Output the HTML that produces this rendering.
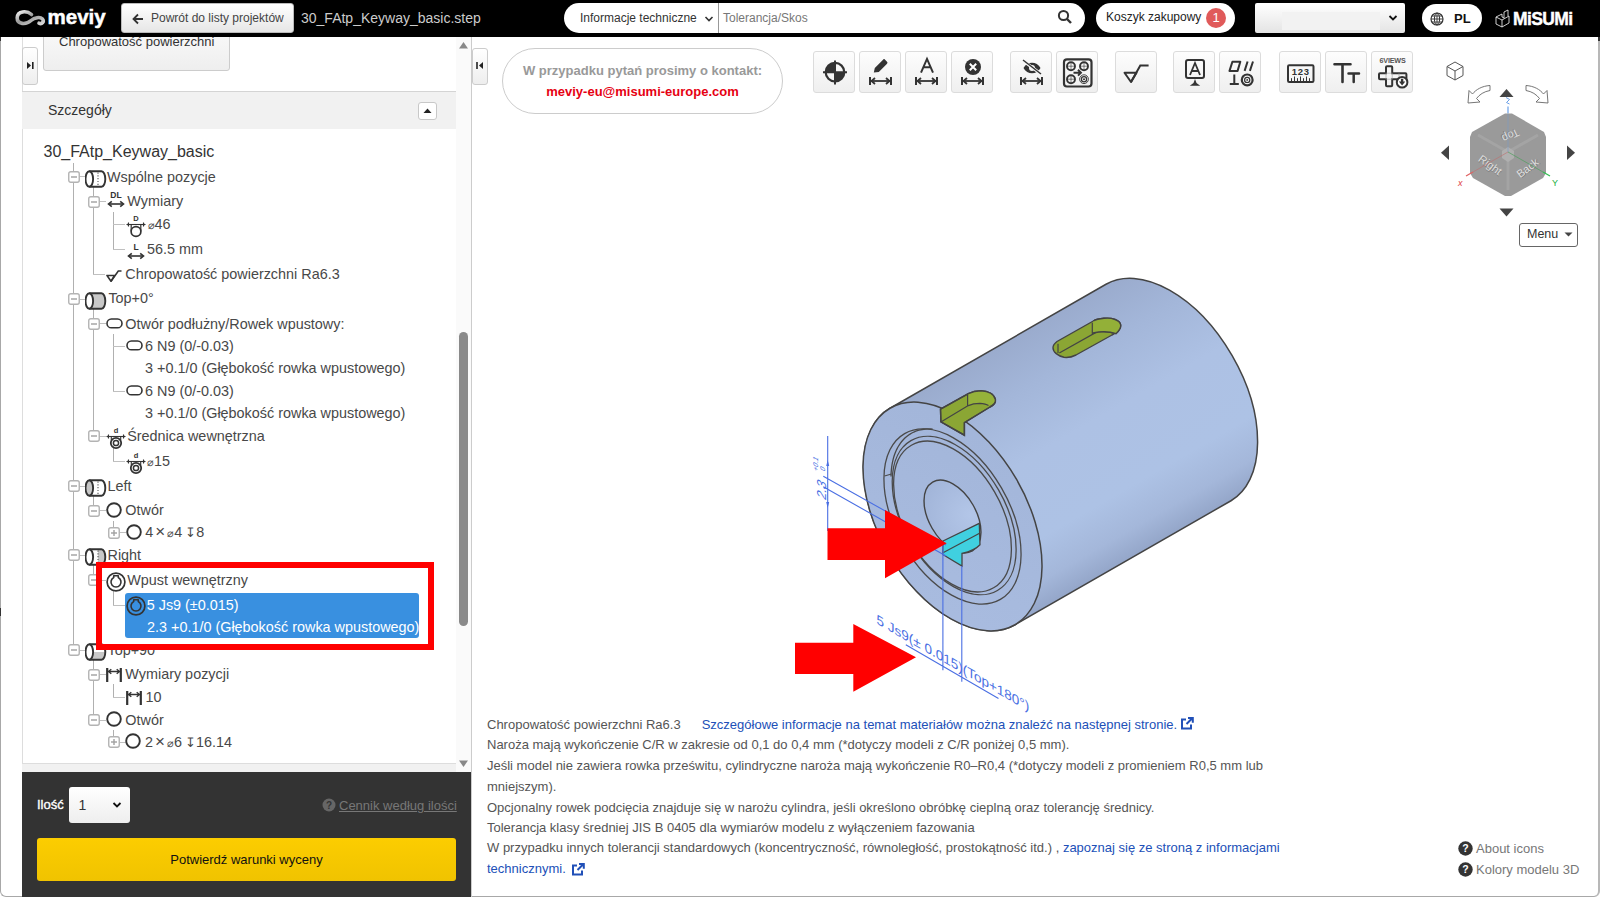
<!DOCTYPE html>
<html><head><meta charset="utf-8">
<style>
*{box-sizing:border-box;margin:0;padding:0}
html,body{width:1600px;height:900px;overflow:hidden;background:#fff;font-family:"Liberation Sans",sans-serif;color:#333;position:relative}
.a{position:absolute}
#hdr{left:0;top:0;width:1600px;height:37px;background:#000;z-index:10}
.btn-grad{background:linear-gradient(#fff,#e6e6e6);border:1px solid #ccc;border-radius:3px}
.tb{position:absolute;top:51px;width:42px;height:42px;border:1px solid #dcdcdc;border-radius:3px;background:linear-gradient(#fdfdfd,#efefef)}
.tb svg{position:absolute;left:0;top:0}
.tr{position:absolute;font-family:"Liberation Sans",sans-serif;font-size:14.4px;color:#444;white-space:nowrap;line-height:16px}
.info{position:absolute;left:487px;font-size:13px;color:#555;white-space:nowrap;line-height:15px}
.lnk{color:#2150b8}
</style></head><body>
<!-- HEADER -->
<div id="hdr" class="a">
  <!-- meviy logo -->
  <svg class="a" style="left:14px;top:9px" width="34" height="19" viewBox="14 9 34 19">
    <defs><linearGradient id="lg" x1="0" y1="0" x2="1" y2="1"><stop offset="0" stop-color="#f0f0f0"/><stop offset=".45" stop-color="#9a9a9a"/><stop offset="1" stop-color="#d8d8d8"/></linearGradient></defs>
    <path d="M31.5,14.5 C27,10.5 17.5,10.5 17.2,17.8 C17,24.5 26,25 31,20.5 C34.5,17.5 40,16.5 42.5,19 C44.5,21.5 42,24.5 39,23.2" fill="none" stroke="url(#lg)" stroke-width="3.6" stroke-linecap="round"/>
  </svg>
  <div class="a" style="left:47.5px;top:5px;font-size:20.5px;font-weight:bold;color:#fff;letter-spacing:0px;-webkit-text-stroke:0.5px #fff;line-height:24px">meviy</div>
  <div class="a btn-grad" style="left:121px;top:3px;width:173px;height:30px;border-color:#bbb"></div>
  <svg class="a" style="left:131px;top:12px" width="14" height="14" viewBox="0 0 14 14"><path d="M12,7 H2.5 M7,2.5 L2.5,7 L7,11.5" stroke="#333" stroke-width="1.8" fill="none"/></svg>
  <div class="a" style="left:151px;top:11px;font-size:12px;color:#444">Powrót do listy projektów</div>
  <div class="a" style="left:301px;top:10px;font-size:14px;color:#ccc">30_FAtp_Keyway_basic.step</div>
  <!-- search -->
  <div class="a" style="left:564px;top:3px;width:521px;height:30px;background:#fff;border-radius:15px"></div>
  <div class="a" style="left:580px;top:11px;font-size:12px;color:#333">Informacje techniczne</div>
  <svg class="a" style="left:704px;top:15px" width="10" height="8" viewBox="0 0 10 8"><path d="M1.5,2 L5,5.5 L8.5,2" stroke="#333" stroke-width="1.6" fill="none"/></svg>
  <div class="a" style="left:718px;top:3px;width:1px;height:30px;background:#999"></div>
  <div class="a" style="left:723px;top:11px;font-size:12px;color:#777">Tolerancja/Skos</div>
  <svg class="a" style="left:1057px;top:9px" width="16" height="16" viewBox="0 0 16 16"><circle cx="6.5" cy="6.5" r="4.6" stroke="#333" stroke-width="2" fill="none"/><path d="M10,10 L14,14" stroke="#333" stroke-width="2.4"/></svg>
  <!-- cart -->
  <div class="a" style="left:1096px;top:3px;width:139px;height:30px;background:#fff;border-radius:15px"></div>
  <div class="a" style="left:1106px;top:10px;font-size:12px;color:#222">Koszyk zakupowy</div>
  <div class="a" style="left:1206px;top:8px;width:20px;height:20px;border-radius:50%;background:#e05a5a;color:#fff;font-size:13px;text-align:center;line-height:20px">1</div>
  <!-- dropdown -->
  <div class="a" style="left:1255px;top:3px;width:150px;height:30px;background:linear-gradient(#fff,#e4e4e4);border-radius:2px"></div>
  <div class="a" style="left:1282px;top:12px;width:98px;height:18px;background:#f2f2f2"></div>
  <svg class="a" style="left:1388px;top:14px" width="10" height="8" viewBox="0 0 10 8"><path d="M1.5,2 L5,5.5 L8.5,2" stroke="#111" stroke-width="1.8" fill="none"/></svg>
  <!-- PL -->
  <div class="a" style="left:1422px;top:4px;width:60px;height:28px;background:#fff;border-radius:14px"></div>
  <svg class="a" style="left:1430px;top:12px" width="14" height="14" viewBox="0 0 14 14"><circle cx="7" cy="7" r="6" stroke="#333" stroke-width="1.2" fill="none"/><ellipse cx="7" cy="7" rx="2.6" ry="6" stroke="#333" stroke-width="1" fill="none"/><path d="M1,7 H13 M2,4 H12 M2,10 H12 M7,1 V13" stroke="#333" stroke-width="0.9"/></svg>
  <div class="a" style="left:1454px;top:11px;font-size:13px;font-weight:bold;color:#111">PL</div>
  <!-- misumi -->
  <svg class="a" style="left:1495px;top:9px" width="16" height="19" viewBox="0 0 16 19"><path d="M1,8 L7,11 L7,18 L1,15 Z M7,11 L14,7 L14,14 L7,18 M1,8 L7,5 M7,5 L7,8 M7,8 L9,9 L9,3 L13,1 L13,7" stroke="#fff" stroke-width="0.8" fill="none"/></svg>
  <div class="a" style="left:1513px;top:9px;font-size:17.5px;font-weight:bold;color:#fff;letter-spacing:-0.6px;-webkit-text-stroke:0.4px #fff">MiSUMi</div>
</div>
<!-- left edge dark line -->
<div class="a" style="left:0;top:20px;width:1600px;height:877px;border:1px solid #a8a8a8;border-right:2px solid #b8b8b8;border-radius:0 0 6px 6px"></div>
<div class="a" style="left:0;top:37px;width:1px;height:4px;background:#333;z-index:11"></div>
<div class="a" style="left:0;top:608px;width:1px;height:8px;background:#333;z-index:11"></div>
<div class="a" style="left:1598px;top:37px;width:2px;height:4px;background:#333;z-index:11"></div>

<!-- LEFT PANEL -->
<div class="a" style="left:22px;top:37px;width:1px;height:735px;background:#ddd"></div>
<div class="a btn-grad" style="left:22px;top:47px;width:16px;height:38px;border-color:#ccc;background:linear-gradient(#fff,#eee)"></div>
<svg class="a" style="left:26px;top:61px" width="9" height="9" viewBox="0 0 9 9"><path d="M1,1 L5,4.5 L1,8Z" fill="#222"/><rect x="6" y="1" width="1.6" height="7" fill="#222"/></svg>
<div class="a" style="left:43px;top:20px;width:187px;height:51px;border:1px solid #ccc;border-radius:3px;background:linear-gradient(#fcfcfc,#eee)"></div>
<div class="a" style="left:59px;top:34px;font-size:13px;color:#333">Chropowatość powierzchni</div>

<div class="a" style="left:22px;top:91px;width:434px;height:38px;background:#f1f1f1;border-top:1px solid #d4d4d4"></div>
<div class="a" style="left:48px;top:102px;font-size:14px;color:#333">Szczegóły</div>
<div class="a" style="left:418px;top:102px;width:19px;height:18px;border:1px solid #c8c8c8;border-radius:3px;background:#fff"></div>
<svg class="a" style="left:422px;top:106px" width="11" height="9" viewBox="0 0 11 9"><path d="M1.5,7 L5.5,2.5 L9.5,7Z" fill="#222"/></svg>

<!-- scrollbar -->
<div class="a" style="left:456px;top:37px;width:15px;height:735px;background:#fafafa"></div>
<svg class="a" style="left:458px;top:41px" width="11" height="8" viewBox="0 0 11 8"><path d="M1,7.5 L5.5,1 L10,7.5Z" fill="#888"/></svg>
<div class="a" style="left:459px;top:332px;width:9px;height:294px;border-radius:5px;background:#8a8a8a"></div>
<svg class="a" style="left:458px;top:760px" width="11" height="8" viewBox="0 0 11 8"><path d="M1,0.5 L5.5,7 L10,0.5Z" fill="#888"/></svg>
<div class="a" style="left:22px;top:763px;width:434px;height:9px;background:#f1f1f1;border-top:1px solid #ddd"></div>

<!-- TREE placeholder -->
<div class="a" style="left:43.5px;top:143px;font-size:16px;color:#333;white-space:nowrap;line-height:18px">30_FAtp_Keyway_basic</div>
<div class="a" style="left:73px;top:163px;width:1px;height:487px;background:#b0b0b0"></div>
<div class="a" style="left:93px;top:187px;width:1px;height:87px;background:#b0b0b0"></div>
<div class="a" style="left:93px;top:274px;width:12px;height:1px;background:#c0c0c0"></div>
<div class="a" style="left:93px;top:309px;width:1px;height:127px;background:#b0b0b0"></div>
<div class="a" style="left:93px;top:496px;width:1px;height:15px;background:#b0b0b0"></div>
<div class="a" style="left:93px;top:565px;width:1px;height:15px;background:#b0b0b0"></div>
<div class="a" style="left:93px;top:660px;width:1px;height:60px;background:#b0b0b0"></div>
<div class="a" style="left:113px;top:212px;width:1px;height:37px;background:#b0b0b0"></div>
<div class="a" style="left:113px;top:224px;width:12px;height:1px;background:#c0c0c0"></div>
<div class="a" style="left:113px;top:249px;width:12px;height:1px;background:#c0c0c0"></div>
<div class="a" style="left:113px;top:334px;width:1px;height:57px;background:#b0b0b0"></div>
<div class="a" style="left:113px;top:346px;width:12px;height:1px;background:#c0c0c0"></div>
<div class="a" style="left:113px;top:391px;width:12px;height:1px;background:#c0c0c0"></div>
<div class="a" style="left:113px;top:446px;width:1px;height:15px;background:#b0b0b0"></div>
<div class="a" style="left:113px;top:461px;width:12px;height:1px;background:#c0c0c0"></div>
<div class="a" style="left:113px;top:521px;width:1px;height:11px;background:#b0b0b0"></div>
<div class="a" style="left:113px;top:590px;width:1px;height:15px;background:#b0b0b0"></div>
<div class="a" style="left:113px;top:605px;width:12px;height:1px;background:#c0c0c0"></div>
<div class="a" style="left:113px;top:684px;width:1px;height:13px;background:#b0b0b0"></div>
<div class="a" style="left:113px;top:697px;width:12px;height:1px;background:#c0c0c0"></div>
<div class="a" style="left:113px;top:730px;width:1px;height:12px;background:#b0b0b0"></div>
<div class="a" style="left:79px;top:176px;width:6px;height:1px;background:#c0c0c0"></div>
<div class="a" style="left:79px;top:299px;width:6px;height:1px;background:#c0c0c0"></div>
<div class="a" style="left:79px;top:486px;width:6px;height:1px;background:#c0c0c0"></div>
<div class="a" style="left:79px;top:555px;width:6px;height:1px;background:#c0c0c0"></div>
<div class="a" style="left:79px;top:650px;width:6px;height:1px;background:#c0c0c0"></div>
<div class="a" style="left:99px;top:201px;width:7px;height:1px;background:#c0c0c0"></div>
<div class="a" style="left:99px;top:323px;width:7px;height:1px;background:#c0c0c0"></div>
<div class="a" style="left:99px;top:436px;width:7px;height:1px;background:#c0c0c0"></div>
<div class="a" style="left:99px;top:510px;width:7px;height:1px;background:#c0c0c0"></div>
<div class="a" style="left:99px;top:580px;width:7px;height:1px;background:#c0c0c0"></div>
<div class="a" style="left:99px;top:674px;width:7px;height:1px;background:#c0c0c0"></div>
<div class="a" style="left:99px;top:720px;width:7px;height:1px;background:#c0c0c0"></div>
<div class="a" style="left:119px;top:532px;width:7px;height:1px;background:#c0c0c0"></div>
<div class="a" style="left:119px;top:742px;width:7px;height:1px;background:#c0c0c0"></div>
<div class="a" style="left:125px;top:592.5px;width:294px;height:45px;background:#3990e0;border-radius:3px"></div>
<svg class="a" style="left:67.8px;top:170.5px" width="12" height="12" viewBox="0 0 12 12"><rect x="0.75" y="0.75" width="10.5" height="10.5" rx="2" fill="#fff" stroke="#b3b3b3" stroke-width="1.4"/><path d="M3,6 H9" stroke="#a0a0a0" stroke-width="1.4"/></svg>
<svg class="a" style="left:67.8px;top:293.0px" width="12" height="12" viewBox="0 0 12 12"><rect x="0.75" y="0.75" width="10.5" height="10.5" rx="2" fill="#fff" stroke="#b3b3b3" stroke-width="1.4"/><path d="M3,6 H9" stroke="#a0a0a0" stroke-width="1.4"/></svg>
<svg class="a" style="left:67.8px;top:480.0px" width="12" height="12" viewBox="0 0 12 12"><rect x="0.75" y="0.75" width="10.5" height="10.5" rx="2" fill="#fff" stroke="#b3b3b3" stroke-width="1.4"/><path d="M3,6 H9" stroke="#a0a0a0" stroke-width="1.4"/></svg>
<svg class="a" style="left:67.8px;top:549.0px" width="12" height="12" viewBox="0 0 12 12"><rect x="0.75" y="0.75" width="10.5" height="10.5" rx="2" fill="#fff" stroke="#b3b3b3" stroke-width="1.4"/><path d="M3,6 H9" stroke="#a0a0a0" stroke-width="1.4"/></svg>
<svg class="a" style="left:67.8px;top:644.0px" width="12" height="12" viewBox="0 0 12 12"><rect x="0.75" y="0.75" width="10.5" height="10.5" rx="2" fill="#fff" stroke="#b3b3b3" stroke-width="1.4"/><path d="M3,6 H9" stroke="#a0a0a0" stroke-width="1.4"/></svg>
<svg class="a" style="left:87.8px;top:195.5px" width="12" height="12" viewBox="0 0 12 12"><rect x="0.75" y="0.75" width="10.5" height="10.5" rx="2" fill="#fff" stroke="#b3b3b3" stroke-width="1.4"/><path d="M3,6 H9" stroke="#a0a0a0" stroke-width="1.4"/></svg>
<svg class="a" style="left:87.8px;top:317.5px" width="12" height="12" viewBox="0 0 12 12"><rect x="0.75" y="0.75" width="10.5" height="10.5" rx="2" fill="#fff" stroke="#b3b3b3" stroke-width="1.4"/><path d="M3,6 H9" stroke="#a0a0a0" stroke-width="1.4"/></svg>
<svg class="a" style="left:87.8px;top:430.0px" width="12" height="12" viewBox="0 0 12 12"><rect x="0.75" y="0.75" width="10.5" height="10.5" rx="2" fill="#fff" stroke="#b3b3b3" stroke-width="1.4"/><path d="M3,6 H9" stroke="#a0a0a0" stroke-width="1.4"/></svg>
<svg class="a" style="left:87.8px;top:504.5px" width="12" height="12" viewBox="0 0 12 12"><rect x="0.75" y="0.75" width="10.5" height="10.5" rx="2" fill="#fff" stroke="#b3b3b3" stroke-width="1.4"/><path d="M3,6 H9" stroke="#a0a0a0" stroke-width="1.4"/></svg>
<svg class="a" style="left:87.8px;top:574.0px" width="12" height="12" viewBox="0 0 12 12"><rect x="0.75" y="0.75" width="10.5" height="10.5" rx="2" fill="#fff" stroke="#b3b3b3" stroke-width="1.4"/><path d="M3,6 H9" stroke="#a0a0a0" stroke-width="1.4"/></svg>
<svg class="a" style="left:87.8px;top:668.5px" width="12" height="12" viewBox="0 0 12 12"><rect x="0.75" y="0.75" width="10.5" height="10.5" rx="2" fill="#fff" stroke="#b3b3b3" stroke-width="1.4"/><path d="M3,6 H9" stroke="#a0a0a0" stroke-width="1.4"/></svg>
<svg class="a" style="left:87.8px;top:714.0px" width="12" height="12" viewBox="0 0 12 12"><rect x="0.75" y="0.75" width="10.5" height="10.5" rx="2" fill="#fff" stroke="#b3b3b3" stroke-width="1.4"/><path d="M3,6 H9" stroke="#a0a0a0" stroke-width="1.4"/></svg>
<svg class="a" style="left:107.8px;top:526.5px" width="12" height="12" viewBox="0 0 12 12"><rect x="0.75" y="0.75" width="10.5" height="10.5" rx="2" fill="#fff" stroke="#b3b3b3" stroke-width="1.4"/><path d="M3,6 H9" stroke="#a0a0a0" stroke-width="1.4"/><path d="M6,3 V9" stroke="#a0a0a0" stroke-width="1.4"/></svg>
<svg class="a" style="left:107.8px;top:736.0px" width="12" height="12" viewBox="0 0 12 12"><rect x="0.75" y="0.75" width="10.5" height="10.5" rx="2" fill="#fff" stroke="#b3b3b3" stroke-width="1.4"/><path d="M3,6 H9" stroke="#a0a0a0" stroke-width="1.4"/><path d="M6,3 V9" stroke="#a0a0a0" stroke-width="1.4"/></svg>
<svg class="a" style="left:85px;top:169.5px" width="22" height="18" viewBox="0 0 22 18"><ellipse cx="4.3" cy="9" rx="3.8" ry="7.8" fill="#fff"/><ellipse cx="4.3" cy="9" rx="3.8" ry="7.8" stroke="#333" fill="none" stroke-width="1.9"/><path d="M4.3,1.2 H16.5 A3.8,7.8 0 0 1 16.5,16.8 H4.3" stroke="#333" fill="none" stroke-width="1.9"/><path d="M13,2.5 V15.5" stroke="#555" stroke-width="1.1" stroke-dasharray="1.2,1.6"/></svg>
<svg class="a" style="left:107px;top:191px" width="18" height="18" viewBox="0 0 18 18"><text x="9" y="6.5" text-anchor="middle" font-family="Liberation Sans" font-weight="bold" font-size="8.5" fill="#333">DL</text><path d="M2,13 H16" stroke="#333" stroke-width="1.6"/><path d="M4.8,10.3 L1.5,13 L4.8,15.7 M13.2,10.3 L16.5,13 L13.2,15.7" stroke="#333" stroke-width="1.6" fill="none"/></svg>
<svg class="a" style="left:125.7px;top:214px" width="20" height="24" viewBox="0 0 20 24"><text x="10" y="7.2" text-anchor="middle" font-family="Liberation Sans" font-weight="bold" font-size="7.5" fill="#333">D</text><path d="M0.5,10.5 H19.5" stroke="#333" stroke-width="1.1"/><path d="M2.5,8.5 V12.5 M17.5,8.5 V12.5" stroke="#333" stroke-width="1.1"/><path d="M1,10.5 L3,9.5 M1,10.5 L3,11.5 M19,10.5 L17,9.5 M19,10.5 L17,11.5" stroke="#333" stroke-width="0.8"/><circle cx="10" cy="17.5" r="4.9" stroke="#333" fill="none" stroke-width="1.7"/><path d="M5.2,10.5 V17 M14.8,10.5 V17" stroke="#333" stroke-width="1.2"/></svg>
<svg class="a" style="left:127px;top:243px" width="18" height="18" viewBox="0 0 18 18"><text x="9" y="6.5" text-anchor="middle" font-family="Liberation Sans" font-weight="bold" font-size="8.5" fill="#333">L</text><path d="M2,13 H16" stroke="#333" stroke-width="1.6"/><path d="M4.8,10.3 L1.5,13 L4.8,15.7 M13.2,10.3 L16.5,13 L13.2,15.7" stroke="#333" stroke-width="1.6" fill="none"/></svg>
<svg class="a" style="left:105.7px;top:270.2px" width="16" height="12" viewBox="0 0 16 12"><path d="M1,5.5 H8.5 L5,11.3 Z" stroke="#333" fill="none" stroke-width="1.6" stroke-linejoin="round"/><path d="M5,11.3 L12.3,1 H15.5" stroke="#333" fill="none" stroke-width="1.6"/></svg>
<svg class="a" style="left:85px;top:292px" width="22" height="18" viewBox="0 0 22 18"><path d="M4.3,1.2 H16.5 A3.8,7.8 0 0 1 16.5,16.8 H4.3 Z" fill="#c8c8c8"/><ellipse cx="4.3" cy="9" rx="3.8" ry="7.8" fill="#fff"/><ellipse cx="4.3" cy="9" rx="3.8" ry="7.8" stroke="#333" fill="none" stroke-width="1.9"/><path d="M4.3,1.2 H16.5 A3.8,7.8 0 0 1 16.5,16.8 H4.3" stroke="#333" fill="none" stroke-width="1.9"/></svg>
<svg class="a" style="left:106px;top:317.5px" width="17" height="11" viewBox="0 0 17 11"><rect x="1" y="1" width="15" height="8.8" rx="4.4" stroke="#333" fill="none" stroke-width="1.6"/></svg>
<svg class="a" style="left:125.5px;top:339.5px" width="17" height="11" viewBox="0 0 17 11"><rect x="1" y="1" width="15" height="8.8" rx="4.4" stroke="#333" fill="none" stroke-width="1.6"/></svg>
<svg class="a" style="left:125.5px;top:384.5px" width="17" height="11" viewBox="0 0 17 11"><rect x="1" y="1" width="15" height="8.8" rx="4.4" stroke="#333" fill="none" stroke-width="1.6"/></svg>
<svg class="a" style="left:106px;top:426px" width="20" height="24" viewBox="0 0 20 24"><text x="10" y="7.2" text-anchor="middle" font-family="Liberation Sans" font-weight="bold" font-size="7.5" fill="#333">d</text><path d="M0.5,10.5 H19.5" stroke="#333" stroke-width="1.1"/><path d="M2.5,8.5 V12.5 M17.5,8.5 V12.5" stroke="#333" stroke-width="1.1"/><path d="M1,10.5 L3,9.5 M1,10.5 L3,11.5 M19,10.5 L17,9.5 M19,10.5 L17,11.5" stroke="#333" stroke-width="0.8"/><circle cx="10" cy="17" r="5.2" stroke="#333" fill="none" stroke-width="1.8"/><circle cx="10" cy="17" r="2.6" stroke="#333" fill="none" stroke-width="1.5"/><path d="M5.3,10.5 V14 M14.7,10.5 V14" stroke="#333" stroke-width="1.1"/></svg>
<svg class="a" style="left:125.7px;top:451px" width="20" height="24" viewBox="0 0 20 24"><text x="10" y="7.2" text-anchor="middle" font-family="Liberation Sans" font-weight="bold" font-size="7.5" fill="#333">d</text><path d="M0.5,10.5 H19.5" stroke="#333" stroke-width="1.1"/><path d="M2.5,8.5 V12.5 M17.5,8.5 V12.5" stroke="#333" stroke-width="1.1"/><path d="M1,10.5 L3,9.5 M1,10.5 L3,11.5 M19,10.5 L17,9.5 M19,10.5 L17,11.5" stroke="#333" stroke-width="0.8"/><circle cx="10" cy="17" r="5.2" stroke="#333" fill="none" stroke-width="1.8"/><circle cx="10" cy="17" r="2.6" stroke="#333" fill="none" stroke-width="1.5"/><path d="M5.3,10.5 V14 M14.7,10.5 V14" stroke="#333" stroke-width="1.1"/></svg>
<svg class="a" style="left:85px;top:478.5px" width="22" height="18" viewBox="0 0 22 18"><ellipse cx="4.3" cy="9" rx="3.8" ry="7.8" fill="#c8c8c8"/><ellipse cx="4.3" cy="9" rx="3.8" ry="7.8" stroke="#333" fill="none" stroke-width="1.9"/><path d="M4.3,1.2 H16.5 A3.8,7.8 0 0 1 16.5,16.8 H4.3" stroke="#333" fill="none" stroke-width="1.9"/><path d="M13,2.5 V15.5" stroke="#555" stroke-width="1.1" stroke-dasharray="1.2,1.6"/></svg>
<svg class="a" style="left:105px;top:501.3px" width="18" height="18" viewBox="0 0 18 18"><circle cx="9" cy="9" r="6.8" stroke="#333" fill="none" stroke-width="1.9"/></svg>
<svg class="a" style="left:124.6px;top:522.7px" width="18" height="18" viewBox="0 0 18 18"><circle cx="9" cy="9" r="6.8" stroke="#333" fill="none" stroke-width="1.9"/></svg>
<svg class="a" style="left:85px;top:547.5px" width="22" height="18" viewBox="0 0 22 18"><path d="M13,1.2 H16.5 A3.8,7.8 0 0 1 16.5,16.8 H13 Z" fill="#c8c8c8"/><ellipse cx="4.3" cy="9" rx="3.8" ry="7.8" fill="#fff"/><ellipse cx="4.3" cy="9" rx="3.8" ry="7.8" stroke="#333" fill="none" stroke-width="1.9"/><path d="M4.3,1.2 H16.5 A3.8,7.8 0 0 1 16.5,16.8 H4.3" stroke="#333" fill="none" stroke-width="1.9"/><path d="M13,2.5 V15.5" stroke="#555" stroke-width="1.1" stroke-dasharray="1.2,1.6"/></svg>
<svg class="a" style="left:104.9px;top:570.6px" width="22" height="22" viewBox="0 0 22 22"><circle cx="11" cy="11" r="8.9" stroke="#333" fill="none" stroke-width="1.7"/><path d="M8.7,6.56 A5,5 0 1 0 13.3,6.56 V4.7 H8.7 Z" stroke="#333" fill="none" stroke-width="1.6" stroke-linejoin="round"/></svg>
<svg class="a" style="left:124.69999999999999px;top:595.3px" width="22" height="22" viewBox="0 0 22 22"><circle cx="11" cy="11" r="8.9" stroke="#333" fill="none" stroke-width="1.7"/><path d="M8.7,6.56 A5,5 0 1 0 13.3,6.56 V4.7 H8.7 Z" stroke="#333" fill="none" stroke-width="1.6" stroke-linejoin="round"/></svg>
<svg class="a" style="left:85px;top:642.5px" width="22" height="18" viewBox="0 0 22 18"><path d="M8,9 H20.3 A3.8,7.8 0 0 1 16.5,16.8 H4.3 Z" fill="#c8c8c8"/><ellipse cx="4.3" cy="9" rx="3.8" ry="7.8" fill="#fff"/><ellipse cx="4.3" cy="9" rx="3.8" ry="7.8" stroke="#333" fill="none" stroke-width="1.9"/><path d="M4.3,1.2 H16.5 A3.8,7.8 0 0 1 16.5,16.8 H4.3" stroke="#333" fill="none" stroke-width="1.9"/></svg>
<svg class="a" style="left:106px;top:666.5px" width="16" height="16" viewBox="0 0 16 16"><path d="M1.2,1 V15 M14.8,1 V15" stroke="#333" stroke-width="2.2"/><path d="M2.5,4.5 H13.5" stroke="#333" stroke-width="1.5"/><path d="M5.3,2.2 L2.6,4.5 L5.3,6.8 M10.7,2.2 L13.4,4.5 L10.7,6.8" stroke="#333" stroke-width="1.4" fill="none"/></svg>
<svg class="a" style="left:126px;top:689.5px" width="16" height="16" viewBox="0 0 16 16"><path d="M1.2,1 V15 M14.8,1 V15" stroke="#333" stroke-width="2.2"/><path d="M2.5,4.5 H13.5" stroke="#333" stroke-width="1.5"/><path d="M5.3,2.2 L2.6,4.5 L5.3,6.8 M10.7,2.2 L13.4,4.5 L10.7,6.8" stroke="#333" stroke-width="1.4" fill="none"/></svg>
<svg class="a" style="left:104.8px;top:710.4px" width="18" height="18" viewBox="0 0 18 18"><circle cx="9" cy="9" r="6.8" stroke="#333" fill="none" stroke-width="1.9"/></svg>
<svg class="a" style="left:124.4px;top:732.1px" width="18" height="18" viewBox="0 0 18 18"><circle cx="9" cy="9" r="6.8" stroke="#333" fill="none" stroke-width="1.9"/></svg>
<div class="tr" style="left:107px;top:169.2px;font-size:14.4px;color:#484848;">Wspólne pozycje</div>
<div class="tr" style="left:127.3px;top:193.2px;font-size:14.4px;color:#484848;">Wymiary</div>
<div class="tr" style="left:147.5px;top:216.2px;font-size:14.4px;color:#484848;"><span style="font-size:10.5px">⌀</span>46</div>
<div class="tr" style="left:147px;top:241.2px;font-size:14.4px;color:#484848;">56.5 mm</div>
<div class="tr" style="left:125.3px;top:266.2px;font-size:14.4px;color:#484848;">Chropowatość powierzchni Ra6.3</div>
<div class="tr" style="left:108.4px;top:290.2px;font-size:14.4px;color:#484848;">Top+0°</div>
<div class="tr" style="left:125.3px;top:315.7px;font-size:14.4px;color:#484848;">Otwór podłużny/Rowek wpustowy:</div>
<div class="tr" style="left:145px;top:338.2px;font-size:14.4px;color:#484848;">6 N9 (0/-0.03)</div>
<div class="tr" style="left:145px;top:359.8px;font-size:14.4px;color:#484848;">3 +0.1/0 (Głębokość rowka wpustowego)</div>
<div class="tr" style="left:145px;top:382.7px;font-size:14.4px;color:#484848;">6 N9 (0/-0.03)</div>
<div class="tr" style="left:145px;top:404.8px;font-size:14.4px;color:#484848;">3 +0.1/0 (Głębokość rowka wpustowego)</div>
<div class="tr" style="left:127.2px;top:427.9px;font-size:14.4px;color:#484848;">Średnica wewnętrzna</div>
<div class="tr" style="left:147px;top:453.2px;font-size:14.4px;color:#484848;"><span style="font-size:10.5px">⌀</span>15</div>
<div class="tr" style="left:107.4px;top:478.0px;font-size:14.4px;color:#484848;">Left</div>
<div class="tr" style="left:125.3px;top:502.4px;font-size:14.4px;color:#484848;">Otwór</div>
<div class="tr" style="left:145.2px;top:524.2px;font-size:14.4px;color:#484848;">4<span style="font-size:17px;line-height:10px;margin:0 2px">×</span><span style="font-size:10.5px">⌀</span>4 <span style="font-size:12.5px;margin-left:-1px">↧</span>8</div>
<div class="tr" style="left:107.5px;top:546.7px;font-size:14.4px;color:#484848;">Right</div>
<div class="tr" style="left:127.2px;top:571.6px;font-size:14.4px;color:#484848;">Wpust wewnętrzny</div>
<div class="tr" style="left:146.7px;top:596.6px;font-size:14.4px;color:#fff;">5 Js9 (±0.015)</div>
<div class="tr" style="left:147px;top:619.4px;font-size:14.4px;color:#fff;">2.3 +0.1/0 (Głębokość rowka wpustowego)</div>
<div class="tr" style="left:107.5px;top:642.0px;font-size:14.4px;color:#484848;">Top+90°</div>
<div class="tr" style="left:125.3px;top:666.2px;font-size:14.4px;color:#484848;">Wymiary pozycji</div>
<div class="tr" style="left:145.5px;top:689.2px;font-size:14.4px;color:#484848;">10</div>
<div class="tr" style="left:125.3px;top:712.0px;font-size:14.4px;color:#484848;">Otwór</div>
<div class="tr" style="left:145px;top:734.2px;font-size:14.4px;color:#484848;">2<span style="font-size:17px;line-height:10px;margin:0 2px">×</span><span style="font-size:10.5px">⌀</span>6 <span style="font-size:12.5px;margin-left:-1px">↧</span>16.14</div>
<div class="a" style="left:96px;top:562px;width:338px;height:88px;border:6px solid #ff0000"></div>

<!-- footer -->
<div class="a" style="left:22px;top:772px;width:449px;height:125px;background:#333"></div>
<div class="a" style="left:37px;top:797px;font-size:13px;color:#fff;-webkit-text-stroke:0.35px #fff">Ilość</div>
<div class="a" style="left:69px;top:787px;width:61px;height:36px;border-radius:3px;background:linear-gradient(#fff,#eee)"></div>
<div class="a" style="left:78.5px;top:797px;font-size:14px;color:#333">1</div>
<svg class="a" style="left:112px;top:801px" width="10" height="8" viewBox="0 0 10 8"><path d="M1.5,2 L5,5.5 L8.5,2" stroke="#111" stroke-width="1.8" fill="none"/></svg>
<svg class="a" style="left:322px;top:798px" width="14" height="14" viewBox="0 0 14 14"><circle cx="7" cy="7" r="6.5" fill="#666"/><text x="7" y="11" text-anchor="middle" font-size="10" font-weight="bold" fill="#333" font-family="Liberation Sans">?</text></svg>
<div class="a" style="left:339px;top:798px;font-size:13px;color:#777;text-decoration:underline">Cennik według ilości</div>
<div class="a" style="left:37px;top:838px;width:419px;height:43px;border-radius:3px;background:linear-gradient(#fccd00,#f0c300)"></div>
<div class="a" style="left:37px;top:852px;width:419px;text-align:center;font-size:13px;color:#111">Potwierdź warunki wyceny</div>

<!-- divider -->
<div class="a" style="left:471px;top:37px;width:1px;height:860px;background:#ccc"></div>
<div class="a btn-grad" style="left:472px;top:48px;width:16px;height:37px;border-color:#ccc;background:linear-gradient(#fff,#eee)"></div>
<svg class="a" style="left:475px;top:61px" width="9" height="9" viewBox="0 0 9 9"><rect x="1.2" y="1" width="1.6" height="7" fill="#222"/><path d="M8,1 L4,4.5 L8,8Z" fill="#222"/></svg>

<!-- MAIN placeholder -->
<div class="a" style="left:502px;top:48px;width:281px;height:66px;border:1px solid #ccc;border-radius:33px;background:#fff"></div>
<div class="a" style="left:502px;top:63px;width:281px;text-align:center;font-size:13px;font-weight:bold;color:#999;line-height:15px">W przypadku pytań prosimy o kontakt:</div>
<div class="a" style="left:502px;top:84px;width:281px;text-align:center;font-size:13px;font-weight:bold;color:#e60012;line-height:15px">meviy-eu@misumi-europe.com</div>
<div class="tb" style="left:813px"><svg width="42" height="42" viewBox="0 0 42 42"><circle cx="21" cy="20.2" r="9.3" fill="none" stroke="#333" stroke-width="2.2"/><path d="M21,10.9 A9.3,9.3 0 0 0 11.7,20.2 H21Z M21,29.5 A9.3,9.3 0 0 0 30.3,20.2 H21Z" fill="#333"/><path d="M21,8.4 V32.4 M9,20.2 H33" stroke="#333" stroke-width="2"/></svg></div>
<div class="tb" style="left:859px"><svg width="42" height="42" viewBox="0 0 42 42"><path d="M13.8,20.4 L14.8,15.9 L22.8,7.9 A1.6,1.6 0 0 1 25.3,7.9 L26.8,9.4 A1.6,1.6 0 0 1 26.8,11.9 L18.8,19.9 Z" fill="#333"/><path d="M10,25 V33 M31,25 V33" stroke="#333" stroke-width="2"/><path d="M11,29 H30" stroke="#333" stroke-width="1.8"/><path d="M15,26 L11.5,29 L15,32 M26,26 L29.5,29 L26,32" stroke="#333" stroke-width="1.8" fill="none"/></svg></div>
<div class="tb" style="left:905px"><svg width="42" height="42" viewBox="0 0 42 42"><path d="M15,20.6 L21,6.9 L27,20.6 M17.5,15.3 H24.5" stroke="#333" stroke-width="2" fill="none"/><path d="M10,25 V33 M31,25 V33" stroke="#333" stroke-width="2"/><path d="M11,29 H30" stroke="#333" stroke-width="1.8"/><path d="M15,26 L11.5,29 L15,32 M26,26 L29.5,29 L26,32" stroke="#333" stroke-width="1.8" fill="none"/></svg></div>
<div class="tb" style="left:951px"><svg width="42" height="42" viewBox="0 0 42 42"><circle cx="21" cy="15" r="8" fill="#333"/><path d="M17.8,11.8 L24.2,18.2 M24.2,11.8 L17.8,18.2" stroke="#fff" stroke-width="2"/><path d="M10,25 V33 M31,25 V33" stroke="#333" stroke-width="2"/><path d="M11,29 H30" stroke="#333" stroke-width="1.8"/><path d="M15,26 L11.5,29 L15,32 M26,26 L29.5,29 L26,32" stroke="#333" stroke-width="1.8" fill="none"/></svg></div>
<div class="tb" style="left:1010px"><svg width="42" height="42" viewBox="0 0 42 42"><path d="M12.5,16 C16,9 26,9 29.5,16 C26,23 16,23 12.5,16Z" fill="#333"/><circle cx="21" cy="16" r="3" fill="#f6f6f6"/><path d="M12.5,9 L30,22" stroke="#f6f6f6" stroke-width="3"/><path d="M12,8 L30,22" stroke="#333" stroke-width="1.4"/><path d="M10,25 V33 M31,25 V33" stroke="#333" stroke-width="2"/><path d="M11,29 H30" stroke="#333" stroke-width="1.8"/><path d="M15,26 L11.5,29 L15,32 M26,26 L29.5,29 L26,32" stroke="#333" stroke-width="1.8" fill="none"/></svg></div>
<div class="tb" style="left:1056px"><svg width="42" height="42" viewBox="0 0 42 42"><rect x="7" y="7.3" width="27.5" height="27.2" rx="3" fill="none" stroke="#333" stroke-width="2.2"/><circle cx="14" cy="14.2" r="4" fill="none" stroke="#333" stroke-width="1.9"/><circle cx="27" cy="14.2" r="4" fill="none" stroke="#333" stroke-width="1.9"/><circle cx="14" cy="27.2" r="4" fill="none" stroke="#333" stroke-width="1.9"/><circle cx="27" cy="27.2" r="4.4" fill="none" stroke="#333" stroke-width="0.9"/><circle cx="27" cy="27.2" r="2.6" fill="none" stroke="#333" stroke-width="1.3"/><circle cx="27" cy="27.2" r="1" fill="#333"/><path d="M11,14.2 H17 M14,11.2 V17.2 M24,14.2 H30 M27,11.2 V17.2 M11,27.2 H17 M14,24.2 V30.2" stroke="#333" stroke-width="0.6"/><path d="M16.5,20.7 H24 M21,17.8 L24,20.7 L21,23.6" stroke="#333" stroke-width="1.9" fill="none"/></svg></div>
<div class="tb" style="left:1115px"><svg width="42" height="42" viewBox="0 0 42 42"><path d="M8.5,20.7 H20.5 L15,30 Z" fill="none" stroke="#333" stroke-width="2" stroke-linejoin="round"/><path d="M15,30 L24.3,13.5 H32.6" stroke="#333" stroke-width="2" fill="none"/></svg></div>
<div class="tb" style="left:1173px"><svg width="42" height="42" viewBox="0 0 42 42"><rect x="12" y="8" width="18" height="18" rx="2" fill="none" stroke="#333" stroke-width="2"/><path d="M16,23 L21,11 L26,23 M18,19 H24" stroke="#333" stroke-width="1.8" fill="none"/><path d="M21,27 L19.5,31 L15.8,33.8 H26.2 L22.5,31 Z" fill="#333"/></svg></div>
<div class="tb" style="left:1219px"><svg width="42" height="42" viewBox="0 0 42 42"><path d="M9.5,18.9 L12.4,9.8 H20.3 L17.6,18.9 Z" fill="none" stroke="#333" stroke-width="2" stroke-linejoin="round"/><path d="M24.6,18.9 L27.6,9.5 M29.9,18.9 L33,9.5" stroke="#333" stroke-width="2"/><path d="M14.3,22.6 V32 M9.8,32 H18.8" stroke="#333" stroke-width="2"/><circle cx="27.2" cy="27.9" r="5.4" fill="none" stroke="#333" stroke-width="2.2"/><circle cx="27.2" cy="27.9" r="2.6" fill="none" stroke="#333" stroke-width="1.2"/><circle cx="27.2" cy="27.9" r="0.9" fill="#333"/></svg></div>
<div class="tb" style="left:1278.5px"><svg width="42" height="42" viewBox="0 0 42 42"><rect x="8" y="13.2" width="25.5" height="16.8" rx="1.2" fill="none" stroke="#333" stroke-width="2"/><text x="20.7" y="22.8" text-anchor="middle" font-family="Liberation Sans" font-weight="bold" font-size="9.5" fill="#333" letter-spacing="0.6">123</text><path d="M11.5,29 V26.2 M14.5,29 V24.5 M17.5,29 V26.2 M20.5,29 V24.5 M23.5,29 V26.2 M26.5,29 V24.5 M29.5,29 V26.2" stroke="#333" stroke-width="1"/></svg></div>
<div class="tb" style="left:1324.5px"><svg width="42" height="42" viewBox="0 0 42 42"><path d="M8.5,12.3 H24.5 M16.5,12.3 V30" stroke="#333" stroke-width="2.6" stroke-linecap="round"/><path d="M22.5,21.5 H33 M27.7,21.5 V30" stroke="#333" stroke-width="2.5" stroke-linecap="round"/></svg></div>
<div class="tb" style="left:1370.5px"><svg width="42" height="42" viewBox="0 0 42 42"><text x="20.5" y="11" text-anchor="middle" font-family="Liberation Sans" font-weight="bold" font-size="7.2" fill="#555" letter-spacing="-0.2">6VIEWS</text><path d="M15,14.2 H19.2 A1,1 0 0 1 20.2,15.2 V21.2 H33.4 A1,1 0 0 1 34.4,22.2 V27.2 H20.2 V33.2 A1,1 0 0 1 19.2,34.2 H15 A1,1 0 0 1 14,33.2 V27.2 H8 A1,1 0 0 1 7,26.2 V22.2 A1,1 0 0 1 8,21.2 H14 V15.2 A1,1 0 0 1 15,14.2 Z" fill="none" stroke="#333" stroke-width="2"/><path d="M14,21.2 H20.2 V27.2 H14 Z M27,21.2 V27.2" fill="none" stroke="#999" stroke-width="0.6"/><circle cx="30.1" cy="30.3" r="5.3" fill="#fff" stroke="#333" stroke-width="2"/><path d="M28.9,26.8 H31.3 V29.6 H33.3 L30.1,33.6 L26.9,29.6 H28.9 Z" fill="#333"/></svg></div>
<svg class="a" style="left:1436px;top:56px" width="150" height="165" viewBox="1436 56 150 165">
<path d="M1455,62 L1463,66.5 V75.5 L1455,80 L1447,75.5 V66.5 Z M1447,66.5 L1455,71 L1463,66.5 M1455,71 V80" fill="none" stroke="#555" stroke-width="1"/>
<path d="M1490,85.5 C1482,86 1476,89.5 1472.5,94 L1469,90.5 L1468,103 L1480,102 L1476.5,98.5 C1479.5,94.5 1484,91.5 1490,90.5 Z" fill="#fff" stroke="#666" stroke-width="0.9"/>
<path d="M1526,85.5 C1534,86 1540,89.5 1543.5,94 L1547,90.5 L1548,103 L1536,102 L1539.5,98.5 C1536.5,94.5 1532,91.5 1526,90.5 Z" fill="#fff" stroke="#666" stroke-width="0.9"/>
<path d="M1499.5,97 L1506.5,89 L1513.5,97 Z" fill="#444"/>
<path d="M1449,145.5 V160 L1441,152.8 Z" fill="#444"/>
<path d="M1567,145.5 V160 L1575,152.8 Z" fill="#444"/>
<path d="M1499.5,208.5 H1513.5 L1506.5,216.5 Z" fill="#444"/>
<path d="M1505,113.5 L1512,113.5 L1544,132 L1546,137 V173 L1543,178 L1511,196 H1505 L1473,178 L1470,173 V137 L1472,132 Z" fill="#9a9a9a"/>
<path d="M1478,135 L1508,152 L1538,135 M1508,152 V190" stroke="#a8a8a8" stroke-width="3" fill="none" opacity="0.7"/>
<path d="M1502,151 L1508,147 L1514,151 V158 L1508,162 L1502,158 Z" fill="#b0b0b0"/>
<text x="1509.7" y="132.7" font-family="Liberation Sans" font-size="11" fill="#6c6c6c" opacity="0.7" text-anchor="middle" transform="rotate(155 1509 132)">Top</text><text x="1509" y="132" font-family="Liberation Sans" font-size="11" fill="#dedede" text-anchor="middle" transform="rotate(155 1509 132)">Top</text>
<text x="1488.7" y="168.7" font-family="Liberation Sans" font-size="11" fill="#6c6c6c" opacity="0.7" text-anchor="middle" transform="rotate(36 1488 168)">Right</text><text x="1488" y="168" font-family="Liberation Sans" font-size="11" fill="#dedede" text-anchor="middle" transform="rotate(36 1488 168)">Right</text>
<text x="1530.7" y="171.7" font-family="Liberation Sans" font-size="11" fill="#6c6c6c" opacity="0.7" text-anchor="middle" transform="rotate(-37 1530 171)">Back</text><text x="1530" y="171" font-family="Liberation Sans" font-size="11" fill="#dedede" text-anchor="middle" transform="rotate(-37 1530 171)">Back</text>
<path d="M1508,106.5 V113" stroke="#6aa0e8" stroke-width="1.2"/>
<path d="M1508,113 V152" stroke="#7a9cc8" stroke-width="1" opacity="0.6"/>
<path d="M1508,152 L1473,172" stroke="#c07070" stroke-width="1" opacity="0.6"/>
<path d="M1473,172 L1466,176" stroke="#e06060" stroke-width="1.3"/>
<path d="M1508,152 L1543,172" stroke="#50a060" stroke-width="1" opacity="0.7"/>
<path d="M1543,172 L1550,176" stroke="#30c050" stroke-width="1.3"/>
<path d="M1506,97.5 L1509.5,99.5 L1506.5,102.5 L1509.5,104" stroke="#6aa0e8" stroke-width="1" fill="none"/>
<text x="1458" y="186" font-family="Liberation Sans" font-size="9" fill="#e04040" font-style="italic">x</text>
<text x="1552" y="186" font-family="Liberation Sans" font-size="9" fill="#20b040">Y</text>
</svg>
<div class="a" style="left:1519px;top:222.5px;width:59px;height:24px;border:1px solid #666;border-radius:3px;background:#fff"></div>
<div class="a" style="left:1527px;top:227px;font-size:12.5px;color:#333;line-height:15px">Menu</div>
<svg class="a" style="left:1564px;top:232px" width="9" height="5" viewBox="0 0 9 5"><path d="M0.5,0.5 H8.5 L4.5,4.5Z" fill="#444"/></svg>
<svg class="a" style="left:0;top:0" width="1600" height="900" viewBox="0 0 1600 900">
<defs>
<linearGradient id="body" gradientUnits="userSpaceOnUse" x1="890" y1="408" x2="1015" y2="625">
<stop offset="0" stop-color="#9aabcd"/><stop offset="0.2" stop-color="#a3b6d9"/><stop offset="0.45" stop-color="#adc1e4"/><stop offset="0.75" stop-color="#adc2e5"/><stop offset="0.9" stop-color="#a4b7da"/><stop offset="1" stop-color="#94a6c9"/></linearGradient>
<linearGradient id="face" gradientUnits="userSpaceOnUse" x1="880" y1="420" x2="1020" y2="620">
<stop offset="0" stop-color="#a2b5d9"/><stop offset="1" stop-color="#a9bce0"/></linearGradient>
<radialGradient id="bore" gradientUnits="userSpaceOnUse" cx="960" cy="500" r="50">
<stop offset="0" stop-color="#b3c6e8"/><stop offset="1" stop-color="#a2b5d9"/></radialGradient>
</defs>
<path d="M890.00,408.25 L1106.00,284.25 A125.0,74.0 60 0 1 1231.00,500.75 L1015.00,624.75 A125.0,74.0 60 0 1 890.00,408.25 Z" fill="url(#body)" stroke="#444" stroke-width="1.5"/>
<ellipse cx="952.50" cy="516.50" rx="125.00" ry="74.00" transform="rotate(60 952.50 516.50)" fill="url(#face)" stroke="#444" stroke-width="1.5"/>
<ellipse cx="952.50" cy="516.50" rx="95.75" ry="56.68" transform="rotate(60 952.50 516.50)" fill="none" stroke="#4a4a4a" stroke-width="1.3"/>
<path d="M932.68,429.10 L930.87,428.98 L929.09,428.94 L927.33,428.97 L925.60,429.07 L923.90,429.25 L922.22,429.50 L920.58,429.82 L918.97,430.21 L917.39,430.68 L915.84,431.22 L914.34,431.84 L912.86,432.52 L911.43,433.28 L910.04,434.10 L908.69,434.99 L907.38,435.96 L906.12,436.99 L904.90,438.08 L903.72,439.24 L902.60,440.47 L901.52,441.76 L900.48,443.12 L899.50,444.53 L898.57,446.01 L897.69,447.54 L896.86,449.13 L896.09,450.78 L895.36,452.48 L894.69,454.24 L894.08,456.05 L893.52,457.91 L893.02,459.81 L892.57,461.77 L892.18,463.76 L891.84,465.81 L891.57,467.89 L891.35,470.01 L891.18,472.18 L891.08,474.37 L891.03,476.60" fill="none" stroke="#4a4a4a" stroke-width="1.3"/>
<path d="M884.5,476 L891.5,474" fill="none" stroke="#4a4a4a" stroke-width="1.1"/>
<ellipse cx="954.18" cy="515.53" rx="86.50" ry="51.21" transform="rotate(60 954.18 515.53)" fill="none" stroke="#4a4a4a" stroke-width="1.3"/>
<ellipse cx="952.50" cy="516.50" rx="82.25" ry="48.69" transform="rotate(60 952.50 516.50)" fill="none" stroke="#4a4a4a" stroke-width="1.3"/>
<ellipse cx="952.50" cy="516.50" rx="39.75" ry="23.53" transform="rotate(60 952.50 516.50)" fill="url(#bore)" stroke="#444" stroke-width="1.4"/>
<path d="M1053,347.7 C1053,352 1058,356 1064,357.3 C1068,357.8 1072,357 1076,355 L1112,335 C1118,332 1121,328.3 1120.7,325 C1120,320 1112,317.5 1104,318.3 C1099,318.8 1095,320 1093.3,321 L1057,341.5 C1055,343 1053,345 1053,347.7 Z" fill="#8ba634" stroke="#444" stroke-width="1.4"/>
<path d="M1059.3,353 L1097.3,331.7 C1102,331 1108,331.5 1116,333.7 M1092.3,322.7 V333.7 M1058,343.7 V353" fill="none" stroke="#444" stroke-width="1.2"/>
<path d="M1093,333 C1102,331 1110,331.5 1116,333.7 C1120,330 1121,327 1120.7,325 C1120,320 1112,317.5 1104,318.3 C1099,318.8 1095,320 1093.3,321 Z" fill="#93b038"/>
<path d="M1093,333 C1102,331 1110,331.5 1116,333.7 C1120,330 1121,327 1120.7,325 C1120,320 1112,317.5 1104,318.3 C1099,318.8 1095,320 1093.3,321" fill="none" stroke="#444" stroke-width="1.4"/>
<path d="M940.5,409.2 L968.3,393.7 C972,391.8 977,390.8 981,390.8 C988,391 994,394 995.4,399.5 C996,403 993,405.5 990,407 L964.4,422.6 V435.2 L940.9,421.9 Z" fill="#8ba634" stroke="#444" stroke-width="1.4"/>
<path d="M968.3,405.6 C972,403.8 976,403.3 980,403.3 C984,403.5 987,404.5 988.5,405.6 C993,404 995.5,402 995.4,399.5 C994,394 988,391 981,390.8 C977,390.8 972,391.8 967.6,394.4 Z" fill="#95b23a"/>
<path d="M940.9,421.9 L968.3,405.6 C972,403.8 976,403.3 980,403.3 C984,403.5 987,404.5 988.5,405.6 M967.6,394.4 V405.6" fill="none" stroke="#444" stroke-width="1.2"/>
<path d="M940.5,409.2 L968.3,393.7 C972,391.8 977,390.8 981,390.8 C988,391 994,394 995.4,399.5 C996,403 993,405.5 990,407 L964.4,422.6 V435.2 L940.9,421.9 Z" fill="none" stroke="#444" stroke-width="1.4"/>
<path d="M943,541 L979.3,523.3 L980,544.7 C976,549 968,552 962,553.3 V566 L942.7,554.5 Z" fill="#40d0e0" stroke="#444" stroke-width="1.3"/>
<path d="M943.5,552.5 L980,533" stroke="#444" stroke-width="1.2"/>
<path d="M827.7,436 V531 M823.3,476.3 L946,545 M823.3,486.8 L946,556" stroke="#4a6fe3" stroke-width="1.1" fill="none"/>
<path d="M827.7,460 L826.2,466 H829.2Z M827.7,508 L826.2,502 H829.2Z" fill="#4a6fe3"/>
<text x="0" y="0" font-family="Liberation Sans" font-size="13" fill="#4a6fe3" transform="translate(826,501) rotate(-90) skewX(-30)">2.3</text>
<text x="0" y="0" font-family="Liberation Sans" font-size="7" fill="#4a6fe3" transform="translate(817.5,472) rotate(-90) skewX(-30)">+0.1</text>
<text x="0" y="0" font-family="Liberation Sans" font-size="7" fill="#4a6fe3" transform="translate(825,472) rotate(-90) skewX(-30)">0</text>
<path d="M942.9,545 V670.3 M961.8,566 V681.8 M905.8,644.8 L998.5,698.5" stroke="#4a6fe3" stroke-width="1.1" fill="none"/>
<text x="0" y="0" font-family="Liberation Sans" font-size="13.5" fill="#4a6fe3" transform="translate(876.5,623.5) skewY(30)">5 Js9(± 0.015)(Top+180°)</text>
<path d="M827.5,528.3 H885 V510 L946.7,543.3 L885,578.3 V560 H827.5 Z" fill="#ff0000"/>
<path d="M795,642.7 H853.3 V624 L916,657.3 L853.3,691.7 V674 H795 Z" fill="#ff0000"/>
</svg>
<div class="info" style="top:716.7px">Chropowatość powierzchni Ra6.3<span style="display:inline-block;width:21px"></span><span class="lnk">Szczegółowe informacje na temat materiałów można znaleźć na następnej stronie.</span></div>
<div class="info" style="top:737.3px">Naroża mają wykończenie C/R w zakresie od 0,1 do 0,4 mm (*dotyczy modeli z C/R poniżej 0,5 mm).</div>
<div class="info" style="top:757.8px">Jeśli model nie zawiera rowka prześwitu, cylindryczne naroża mają wykończenie R0–R0,4 (*dotyczy modeli z promieniem R0,5 mm lub</div>
<div class="info" style="top:778.5px">mniejszym).</div>
<div class="info" style="top:799.5px">Opcjonalny rowek podcięcia znajduje się w narożu cylindra, jeśli określono obróbkę cieplną oraz tolerancję średnicy.</div>
<div class="info" style="top:820.4px">Tolerancja klasy średniej JIS B 0405 dla wymiarów modelu z wyłączeniem fazowania</div>
<div class="info" style="top:840.3px">W przypadku innych tolerancji standardowych (koncentryczność, równoległość, prostokątność itd.) , <span class="lnk">zapoznaj się ze stroną z informacjami</span></div>
<div class="info" style="top:861.4px"><span class="lnk">technicznymi.</span></div>
<svg class="a" style="left:1180px;top:717px" width="14" height="13" viewBox="0 0 14 13"><path d="M6,2.5 H2 V11.5 H11 V7.5" fill="none" stroke="#2150b8" stroke-width="2"/><path d="M6.5,7 L12,1.5 M8,1 H12.8 V5.8" fill="none" stroke="#2150b8" stroke-width="2"/></svg>
<svg class="a" style="left:571px;top:862.5px" width="14" height="13" viewBox="0 0 14 13"><path d="M6,2.5 H2 V11.5 H11 V7.5" fill="none" stroke="#2150b8" stroke-width="2"/><path d="M6.5,7 L12,1.5 M8,1 H12.8 V5.8" fill="none" stroke="#2150b8" stroke-width="2"/></svg>
<svg class="a" style="left:1458px;top:841px" width="15" height="15" viewBox="0 0 15 15"><circle cx="7.5" cy="7.5" r="7.2" fill="#333"/><text x="7.5" y="11.3" text-anchor="middle" font-family="Liberation Sans" font-weight="bold" font-size="10.5" fill="#fff">?</text></svg>
<svg class="a" style="left:1458px;top:862px" width="15" height="15" viewBox="0 0 15 15"><circle cx="7.5" cy="7.5" r="7.2" fill="#333"/><text x="7.5" y="11.3" text-anchor="middle" font-family="Liberation Sans" font-weight="bold" font-size="10.5" fill="#fff">?</text></svg>
<div class="a" style="left:1476px;top:841px;font-size:13px;color:#777;line-height:15px">About icons</div>
<div class="a" style="left:1476px;top:862px;font-size:13px;color:#777;line-height:15px">Kolory modelu 3D</div>
</body></html>
